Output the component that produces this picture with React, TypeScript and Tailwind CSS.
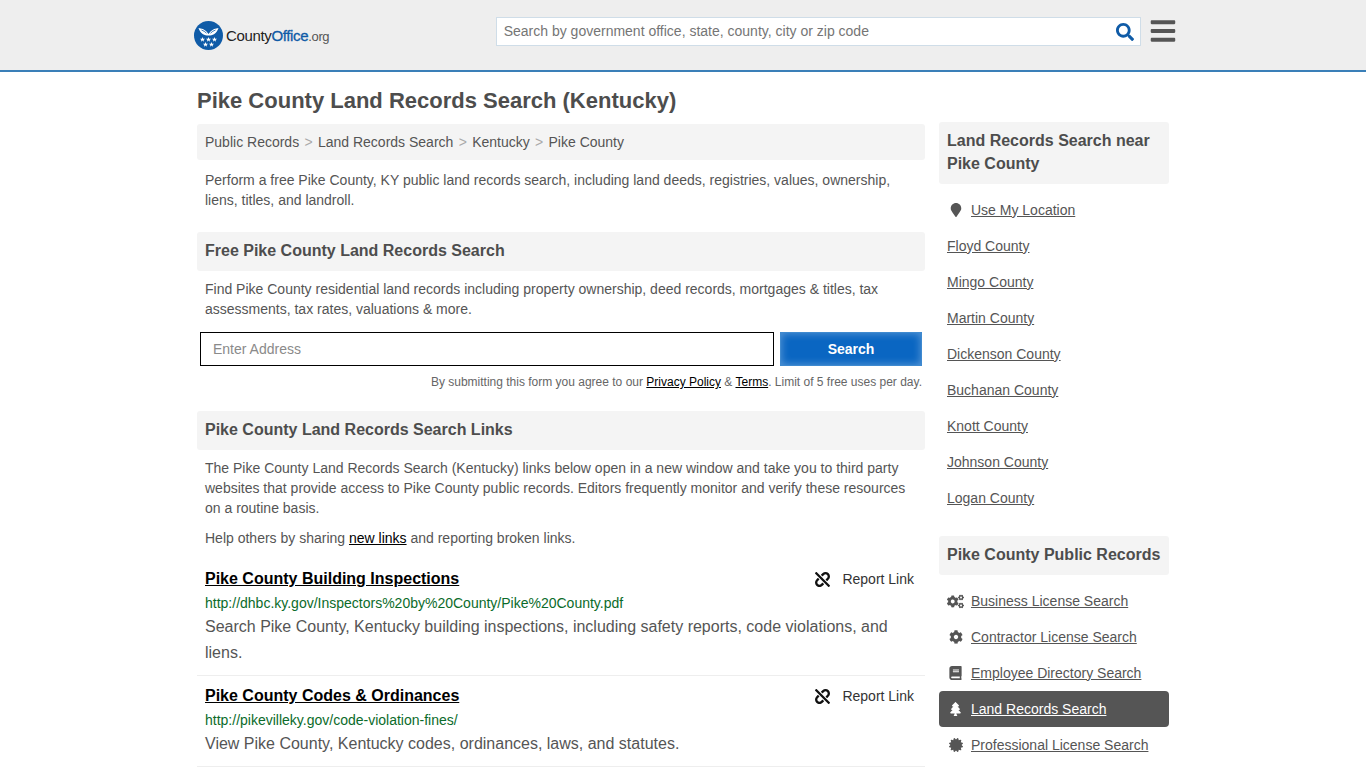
import React from 'react';
import { FaBars, FaBook, FaCertificate, FaCog, FaCogs, FaMapMarker, FaSearch, FaTree, FaUnlink } from 'react-icons/fa';

const nearby = ['Floyd County', 'Mingo County', 'Martin County', 'Dickenson County', 'Buchanan County', 'Knott County', 'Johnson County', 'Logan County'];

const records = [
  { name: 'Business License Search', icon: <FaCogs className="w-[17px] h-[17px]" /> },
  { name: 'Contractor License Search', icon: <FaCog className="w-[14px] h-[14px]" /> },
  { name: 'Employee Directory Search', icon: <FaBook className="w-[13px] h-[14px]" /> },
  { name: 'Land Records Search', icon: <FaTree className="w-[13px] h-[14px]" />, active: true },
  { name: 'Professional License Search', icon: <FaCertificate className="w-[14px] h-[14px]" /> },
];

function Star({ x, y }: { x: number; y: number }) {
  return (
    <polygon
      transform={`translate(${x} ${y})`}
      points="0,-2.6 0.7,-0.8 2.6,-0.8 1.1,0.4 1.6,2.2 0,1.1 -1.6,2.2 -1.1,0.4 -2.6,-0.8 -0.7,-0.8"
      fill="#fff"
    />
  );
}

function Logo() {
  return (
    <div className="flex items-center">
      <svg width="29" height="29" viewBox="0 0 29 29" className="shrink-0">
        <circle cx="14.5" cy="14.5" r="14.5" fill="#0f5ba7" />
        <path d="M4.500 7c3 .3 6 1.500 8 3.500l2 2.500 2-2.500c2-2 5-3.200 8-3.500-.8 2.500-2.200 5-4.500 6.300-1.500.9-3.500 1.200-5.500 1.200s-4-.3-5.500-1.200C6.700 12 5.300 9.500 4.500 7z" fill="#fff" />
        <path d="M7.500 9c2 .7 3.500 1.700 5 3.200M21.500 9c-2 .7-3.500 1.700-5 3.200" stroke="#0f5ba7" strokeWidth="0.8" fill="none" />
        <Star x={8.500} y={18.500} />
        <Star x={14.500} y={18.500} />
        <Star x={20.500} y={18.500} />
        <Star x={11.500} y={23.500} />
        <Star x={17.500} y={23.500} />
      </svg>
      <span className="ml-[3px] mt-[1px] text-[15px] tracking-[-0.35px] text-[#222]">
        County<span className="text-[#0f5ba7] [-webkit-text-stroke:0.3px_#0f5ba7]">Office</span>
        <span className="text-[13px] text-[#555]">.org</span>
      </span>
    </div>
  );
}

function SectionHead({ children }: { children: React.ReactNode }) {
  return (
    <div className="h-[39px] px-2 pb-[2px] flex items-center bg-[#f4f4f4] rounded-[3px] text-[16px] font-bold text-[#4d4d4d]">
      {children}
    </div>
  );
}

function LinkResult({ title, url, desc }: { title: string; url: string; desc: string }) {
  return (
    <div className="px-2 pb-[9px] border-b border-[#eeeeee]">
      <div className="flex items-center justify-between h-[26px]">
        <a className="text-[16px] font-bold text-black underline">{title}</a>
        <span className="flex items-center text-[14px] text-[#333] mr-[3px]">
          <FaUnlink className="w-[15px] h-[15px] text-[#111] mr-[12px]" />
          Report Link
        </span>
      </div>
      <div className="text-[14px] leading-[20px] text-[#0b6b2a] mt-[1px]">{url}</div>
      <p className="text-[16px] leading-[26px] text-[#555] mt-[1px]">{desc}</p>
    </div>
  );
}

export default function App() {
  return (
    <div className="h-[768px] overflow-hidden bg-white font-['Liberation_Sans',Arial,sans-serif] text-[14px] text-[#555]">
      <header className="h-[72px] bg-[#eeeeee] border-b-2 border-[#3a7fb8]">
        <div className="w-[984px] ml-[192px] h-[70px] flex items-center">
          <div className="w-[303px] pl-[2px] pt-[1px]"><Logo /></div>
          <div className="w-[646px] ml-[1px] h-[29px] -mt-[7px] bg-white border border-[#cfdde8] flex items-center justify-between pl-[7px] pr-[6px]">
            <span className="text-[14px] text-[#757575]">Search by government office, state, county, city or zip code</span>
            <FaSearch className="w-[18px] h-[18px] text-[#0f5ba7]" />
          </div>
          <FaBars className="w-[26px] h-[28px] ml-[9px] -mt-[9px] text-[#555]" />
        </div>
      </header>

      <div className="w-[972px] ml-[197px] flex gap-[14px]">
        <main className="w-[728px] shrink-0">
          <h1 className="h-[52px] pt-[4px] flex items-center text-[22px] font-bold text-[#4d4d4d]">Pike County Land Records Search (Kentucky)</h1>

          <div className="h-[36px] px-2 flex items-center bg-[#f4f4f4] rounded-[3px] text-[14px] text-[#555]">
            <span>Public Records</span>
            <span className="mx-[5.3px] text-[#aaa]">&gt;</span>
            <span>Land Records Search</span>
            <span className="mx-[5.3px] text-[#aaa]">&gt;</span>
            <span>Kentucky</span>
            <span className="mx-[5.3px] text-[#aaa]">&gt;</span>
            <span>Pike County</span>
          </div>

          <p className="px-2 mt-[10px] leading-[20px]">
            Perform a free Pike County, KY public land records search, including land deeds, registries, values, ownership, liens, titles, and landroll.
          </p>

          <div className="mt-[22px]"><SectionHead>Free Pike County Land Records Search</SectionHead></div>

          <p className="px-2 mt-[8px] leading-[20px]">
            Find Pike County residential land records including property ownership, deed records, mortgages &amp; titles, tax assessments, tax rates, valuations &amp; more.
          </p>

          <div className="mt-[13px] ml-[3px] flex gap-[6px]">
            <div className="w-[574px] h-[34px] border border-black flex items-center px-3 text-[14px] text-[#8a8a8a]">Enter Address</div>
            <button className="w-[142px] h-[34px] border border-[#3f8ad0] bg-[#0a66c2] shadow-[inset_0_0_8px_rgba(255,255,255,0.35)] text-white text-[14px] font-bold">Search</button>
          </div>

          <p className="mt-[8px] pr-[3px] text-right text-[12px] leading-[16px] text-[#666]">
            By submitting this form you agree to our <a className="text-black underline">Privacy Policy</a> &amp; <a className="text-black underline">Terms</a>. Limit of 5 free uses per day.
          </p>

          <div className="mt-[21px]"><SectionHead>Pike County Land Records Search Links</SectionHead></div>

          <p className="px-2 mt-[8px] leading-[20px]">
            The Pike County Land Records Search (Kentucky) links below open in a new window and take you to third party websites that provide access to Pike County public records. Editors frequently monitor and verify these resources on a routine basis.
          </p>
          <p className="px-2 mt-[10px] leading-[20px]">
            Help others by sharing <a className="text-black underline">new links</a> and reporting broken links.
          </p>

          <div className="mt-[18px] flex flex-col gap-[7px]">
            <LinkResult
              title="Pike County Building Inspections"
              url="http://dhbc.ky.gov/Inspectors%20by%20County/Pike%20County.pdf"
              desc="Search Pike County, Kentucky building inspections, including safety reports, code violations, and liens."
            />
            <LinkResult
              title="Pike County Codes & Ordinances"
              url="http://pikevilleky.gov/code-violation-fines/"
              desc="View Pike County, Kentucky codes, ordinances, laws, and statutes."
            />
          </div>
        </main>

        <aside className="w-[230px] shrink-0 pt-[50px]">
          <div className="h-[62px] px-2 pb-[2px] flex items-center bg-[#f4f4f4] rounded-[3px] text-[16px] leading-[23px] font-bold text-[#4d4d4d]">
            Land Records Search near Pike County
          </div>

          <div className="mt-[8px]">
            <div className="h-[36px] px-2 flex items-center">
              <span className="w-[24px] pl-[3px]"><FaMapMarker className="w-[12px] h-[14px] text-[#555]" /></span>
              <a className="underline">Use My Location</a>
            </div>
            {nearby.map((county) => (
              <div key={county} className="h-[36px] px-2 flex items-center">
                <a className="underline">{county}</a>
              </div>
            ))}
          </div>

          <div className="mt-[20px] h-[39px] px-2 pb-[2px] flex items-center bg-[#f4f4f4] rounded-[3px] text-[16px] font-bold text-[#4d4d4d]">
            Pike County Public Records
          </div>

          <div className="mt-[8px]">
            {records.map((r) => (
              <div
                key={r.name}
                className={`h-[36px] px-2 flex items-center rounded-[4px] ${r.active ? 'bg-[#555555] text-white' : ''}`}
              >
                <span className="w-[24px] flex justify-center pr-[7px]">{r.icon}</span>
                <a className="underline">{r.name}</a>
              </div>
            ))}
          </div>
        </aside>
      </div>
    </div>
  );
}
